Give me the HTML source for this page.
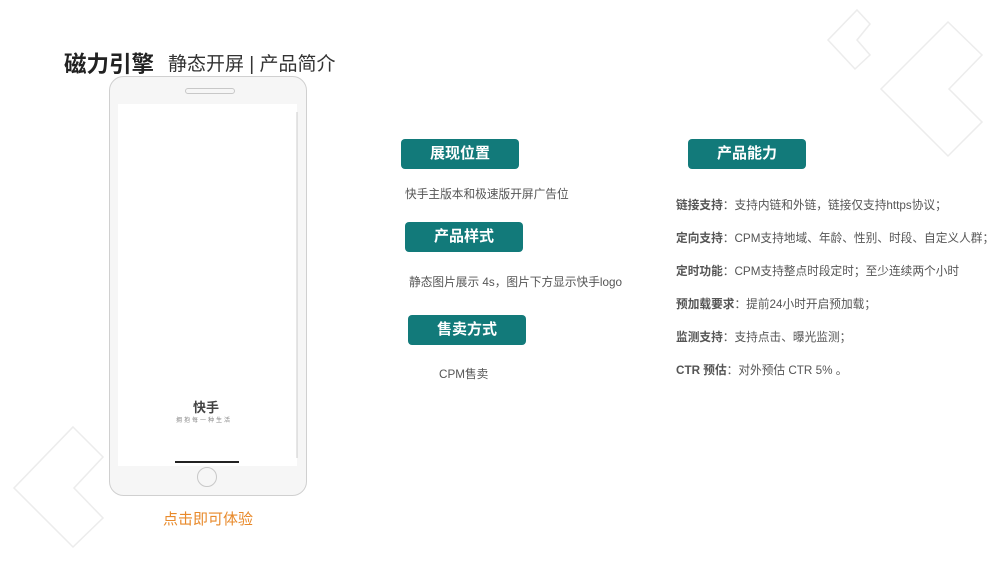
<!DOCTYPE html><html><head><meta charset="utf-8"><style>
body{margin:0;width:1000px;height:563px;background:#fff;position:relative;overflow:hidden;font-family:"Liberation Sans","Noto Sans CJK SC",sans-serif}
.a{position:absolute;white-space:nowrap}
.btn{position:absolute;width:118px;height:30px;background:#127a7a;border-radius:4px;color:#fff;font-weight:bold;font-size:15px;line-height:30px;text-align:center}
.t{font-size:11.7px;color:#555}
.r b{color:#555}
</style></head><body>
<svg class="a" style="left:0;top:0" width="1000" height="563">
<g fill="none" stroke="#ececec" stroke-width="1.5">
<path d="M948 22 L982 55 L949 89 L982 122 L948 156 L881 89 Z"/>
<path d="M857 10 L870 24 L857 40 L870 55 L855 69 L828 40 Z"/>
<path d="M73 427 L103 457 L74 488 L103 518 L73 547 L14 488 Z"/>
</g>
<rect x="109.5" y="76.5" width="197" height="419" rx="14" fill="#f6f6f6" stroke="#d0d0d0"/>
<rect x="118" y="104" width="179" height="362" fill="#fff"/>
<line x1="297" y1="112" x2="297" y2="458" stroke="#ccc"/>
<rect x="185.5" y="88.5" width="49" height="5" rx="2.5" fill="none" stroke="#c8c8c8"/>
<rect x="175" y="461" width="64" height="2" fill="#222"/>
<circle cx="207" cy="477" r="9.5" fill="none" stroke="#c8c8c8"/>
</svg>
<div class="a" style="left:64px;top:47px;font-size:22.5px;font-weight:bold;color:#222">磁力引擎</div>
<div class="a" style="left:168px;top:49px;font-size:19px;color:#333">静态开屏 | 产品简介</div>
<div class="a" style="left:193px;top:397px;font-size:13px;color:#444;font-weight:bold">快手</div>
<div class="a" style="left:176px;top:415px;font-size:6px;color:#888;letter-spacing:2px">拥抱每一种生活</div>
<div class="a" style="left:163px;top:508px;font-size:15px;color:#e8892a">点击即可体验</div>
<div class="btn" style="left:401px;top:139px">展现位置</div>
<div class="btn" style="left:405px;top:222px">产品样式</div>
<div class="btn" style="left:408px;top:315px">售卖方式</div>
<div class="btn" style="left:688px;top:139px">产品能力</div>
<div class="a t" style="left:405px;top:185px">快手主版本和极速版开屏广告位</div>
<div class="a t" style="left:409px;top:273px">静态图片展示 4s，图片下方显示快手logo</div>
<div class="a t" style="left:439px;top:365px">CPM售卖</div>
<div class="a t r" style="left:676px;top:196px"><b>链接支持</b>：支持内链和外链，链接仅支持https协议；</div>
<div class="a t r" style="left:676px;top:229px"><b>定向支持</b>：CPM支持地域、年龄、性别、时段、自定义人群；</div>
<div class="a t r" style="left:676px;top:262px"><b>定时功能</b>：CPM支持整点时段定时；至少连续两个小时</div>
<div class="a t r" style="left:676px;top:295px"><b>预加载要求</b>：提前24小时开启预加载；</div>
<div class="a t r" style="left:676px;top:328px"><b>监测支持</b>：支持点击、曝光监测；</div>
<div class="a t r" style="left:676px;top:361px"><b>CTR 预估</b>：对外预估 CTR 5% 。</div>
</body></html>
